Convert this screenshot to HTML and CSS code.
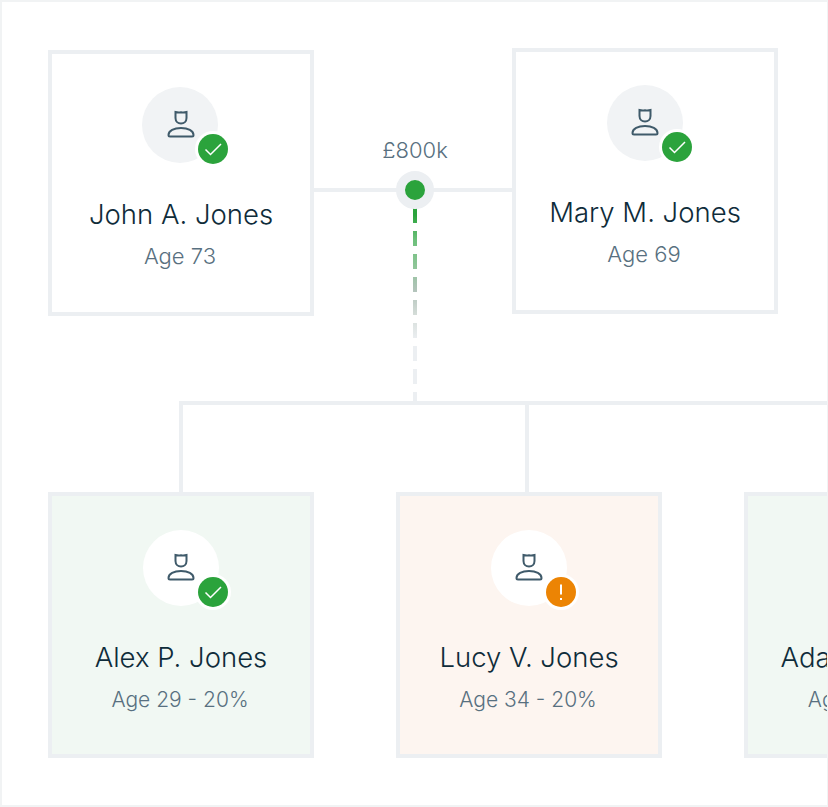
FILE: index.html
```html
<!DOCTYPE html>
<html lang="en">
<head>
<meta charset="utf-8">
<title>Family tree</title>
<link rel="stylesheet" href="styles.css">
</head>
<body>
<main class="canvas">
  <svg class="wires" width="828" height="807" viewBox="0 0 828 807" aria-hidden="true">
    <defs>
      <linearGradient id="fade" gradientUnits="userSpaceOnUse" x1="0" y1="215" x2="0" y2="340">
        <stop offset="0" stop-color="#2ba33c"/>
        <stop offset="0.2" stop-color="#6dc07b"/>
        <stop offset="0.4" stop-color="#8cc596"/>
        <stop offset="0.6" stop-color="#b2c3ba"/>
        <stop offset="0.8" stop-color="#d5ddd9"/>
        <stop offset="1" stop-color="#eceff2"/>
      </linearGradient>
      <symbol id="person" viewBox="0 0 28 28"><path d="M8.500 2V8C8.500 11.500 11 13.500 14 13.500S19.500 11.500 19.500 8V2Q17 2.800 14 2.300 11 2.800 8.500 2Z"/><path d="M1.500 25C1.500 20.500 7 18 14 18S26.500 20.500 26.500 25C26.500 26 26 26.500 25 26.500H3C2 26.500 1.500 26 1.500 25Z"/></symbol>
      <symbol id="tick" viewBox="0 0 30 30"><path d="M7.500 15.500L12.500 20.500 23 10"/></symbol>
      <symbol id="bang" viewBox="0 0 30 30"><path d="M15 7.500V17.500M15 21V23"/></symbol>
    </defs>
    <path class="wire" d="M314 190H512"/>
    <path class="wire" d="M181 492V403H828M527 403V492"/>
    <path class="dash" d="M415 208V402"/>
  </svg>

  <div class="midpoint"><span class="amount">£800k</span><span class="dot"></span></div>

  <article class="card john">
    <div class="avatar plain">
      <svg class="person"><use href="#person"/></svg>
      <span class="badge ok"><svg><use href="#tick"/></svg></span>
    </div>
    <h2>John A. Jones</h2>
    <p>Age 73</p>
  </article>

  <article class="card mary">
    <div class="avatar plain">
      <svg class="person"><use href="#person"/></svg>
      <span class="badge ok"><svg><use href="#tick"/></svg></span>
    </div>
    <h2>Mary M. Jones</h2>
    <p>Age 69</p>
  </article>

  <article class="card child alex good">
    <div class="avatar">
      <svg class="person"><use href="#person"/></svg>
      <span class="badge ok"><svg><use href="#tick"/></svg></span>
    </div>
    <h2>Alex P. Jones</h2>
    <p>Age 29 - 20%</p>
  </article>

  <article class="card child lucy warn">
    <div class="avatar">
      <svg class="person"><use href="#person"/></svg>
      <span class="badge alert"><svg><use href="#bang"/></svg></span>
    </div>
    <h2>Lucy V. Jones</h2>
    <p>Age 34 - 20%</p>
  </article>

  <article class="card child adam good">
    <div class="avatar">
      <svg class="person"><use href="#person"/></svg>
      <span class="badge ok"><svg><use href="#tick"/></svg></span>
    </div>
    <h2>Adam R. Jones</h2>
    <p>Age 27 - 20%</p>
  </article>
</main>
</body>
</html>
```
FILE: styles.css
```css
* { box-sizing: border-box; }
html, body { margin: 0; padding: 0; background: #fff; overflow: hidden; }
.canvas {
  position: relative;
  width: 828px;
  height: 807px;
  overflow: hidden;
  border: 2px solid #f1f3f4;
  border-right-width: 1px;
  font-family: "Inter", "Liberation Sans", sans-serif;
}
.wires { position: absolute; left: -2px; top: -2px; }
.wire { fill: none; stroke: #eceff2; stroke-width: 4; }
.dash { fill: none; stroke: url(#fade); stroke-width: 4; stroke-dasharray: 15 8; }
.card {
  position: absolute;
  width: 266px;
  height: 266px;
  border: 4px solid #eceff2;
  background: #fff;
  display: flex;
  flex-direction: column;
  align-items: center;
  padding-top: 33px;
}
.child { padding-top: 34px; }
.john { left: 46px; top: 48px; }
.mary { left: 510px; top: 46px; }
.alex { left: 46px; top: 490px; }
.lucy { left: 394px; top: 490px; }
.adam { left: 742px; top: 490px; }
.good { background: #f1f8f3; }
.warn { background: #fdf5f0; }
.avatar {
  position: relative;
  width: 76px;
  height: 76px;
  border-radius: 50%;
  background: #fff;
  display: flex;
  align-items: center;
  justify-content: center;
  flex: none;
}
.john .avatar { margin-left: -2px; }
.plain { background: #f1f3f5; }
.person { width: 28px; height: 28px; margin: -2px 0 0; fill: none; stroke: #3f5a6a; stroke-width: 2; }
.john .person { margin-left: 2px; }
.badge {
  position: absolute;
  left: 52px;
  top: 44px;
  width: 36px;
  height: 36px;
  padding: 3px;
  border-radius: 50%;
  background: #fff;
}
.john .badge { left: 53px; }
.badge svg { display: block; width: 30px; height: 30px; border-radius: 50%; fill: none; stroke: #fff; stroke-width: 1.500; }
.ok svg { background: #2ba33c; }
.alert svg { background: #ec8404; stroke-width: 2; }
h2 {
  margin: 33px 0 0;
  font-size: 27.500px;
  line-height: 36px;
  font-weight: 300;
  color: #0f2c3a;
  white-space: nowrap;
}
p {
  margin: 10px 0 0 -2px;
  font-size: 22px;
  line-height: 28px;
  font-weight: 300;
  color: #587080;
  white-space: nowrap;
}
.child p { margin-top: 11px; font-size: 21px; }
.midpoint { position: absolute; left: 394px; top: 134px; width: 38px; }
.amount {
  position: absolute;
  left: 19px;
  top: 0;
  transform: translateX(-50%);
  font-size: 22px;
  line-height: 28px;
  font-weight: 300;
  color: #587080;
}
.dot {
  position: absolute;
  left: 0;
  top: 35px;
  width: 38px;
  height: 38px;
  border-radius: 50%;
  border: 9px solid #eceff2;
  background: #2ba33c;
}
```
